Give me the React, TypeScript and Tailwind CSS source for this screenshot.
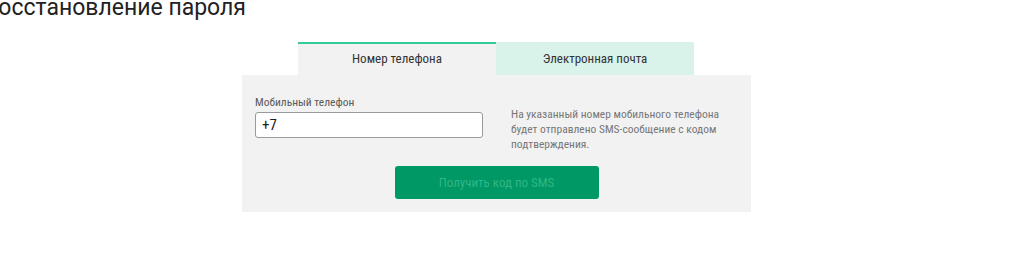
import { useState } from "react";

const tabs = ["Номер телефона", "Электронная почта"];

export default function App() {
  const [active, setActive] = useState(0);
  const [phone, setPhone] = useState("+7");

  return (
    <div className="w-[1024px] h-[258px] bg-white font-['Roboto',sans-serif] text-[#222] overflow-hidden">
      <div className="flex h-[42px] items-start">
        <h1 className="-mt-[6px] -ml-[16px] text-[23px] leading-[28px] font-normal whitespace-nowrap">
          Восстановление пароля
        </h1>
      </div>

      <div className="ml-[242px] w-[509px] font-stretch-condensed">
        <div className="flex pl-[56px]">
          {tabs.map((tab, i) => (
            <button
              key={tab}
              onClick={() => setActive(i)}
              className={
                i === active
                  ? "w-[198px] h-[33px] border-t-2 border-[#33cc99] bg-[#f2f2f2] text-[13px] text-[#333] pb-[1px]"
                  : "w-[198px] h-[33px] bg-[#d9f2ea] text-[13px] text-[#333] pt-[1px]"
              }
            >
              {tab}
            </button>
          ))}
        </div>

        <div className="h-[137px] bg-[#f2f2f2] px-[13px] pt-[19px]">
          <div className="flex h-[44px] items-start">
            <div className="w-[228px]">
              <div className="text-[11.5px] leading-[16px] text-[#5a5a5a] mb-[2px]">
                Мобильный телефон
              </div>
              <input
                value={phone}
                onChange={(e) => setPhone(e.target.value)}
                className="w-[228px] h-[26px] border border-[#9a9a9a] rounded-[3px] bg-white px-[6px] text-[15px] text-[#222] outline-none"
              />
            </div>
            <p className="ml-[28px] mt-[13px] w-[220px] text-[11.5px] leading-[15px] text-[#777]">
              На указанный номер мобильного телефона будет отправлено
              SMS-сообщение с кодом подтверждения.
            </p>
          </div>

          <div className="flex justify-center mt-[28px]">
            <button
              disabled
              className="w-[204px] h-[33px] rounded-[3px] bg-[#009966] text-[13px] text-[#30b585]"
            >
              Получить код по SMS
            </button>
          </div>
        </div>
      </div>
    </div>
  );
}
